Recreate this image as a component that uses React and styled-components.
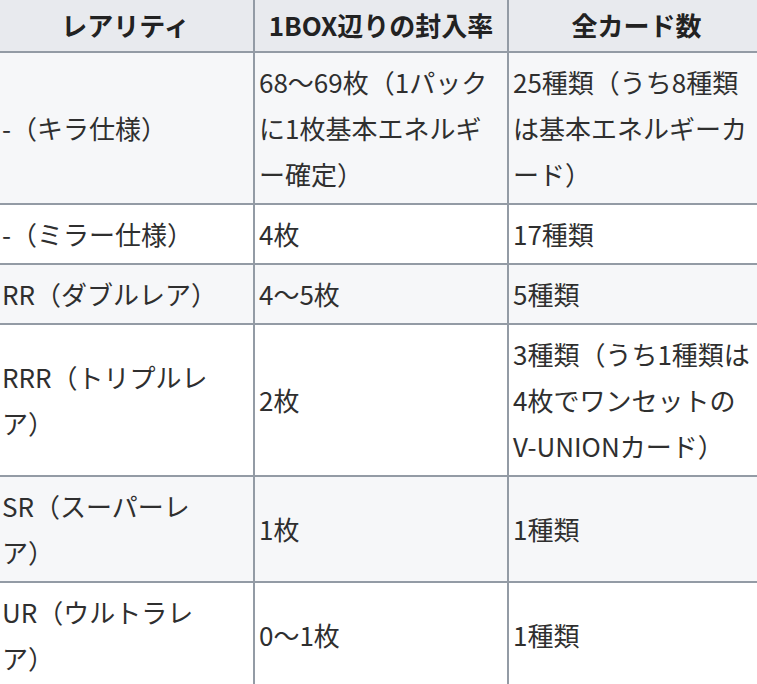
import React from 'react';
import styled, { createGlobalStyle } from 'styled-components';

const GlobalStyle = createGlobalStyle`
  html, body {
    margin: 0;
    padding: 0;
    overflow: hidden;
    background: #ffffff;
  }
`;

const Page = styled.div`
  width: 757px;
  height: 684px;
  overflow: hidden;
`;

const Table = styled.table`
  table-layout: fixed;
  width: 770px;
  margin-left: -4px;
  border-collapse: separate;
  border-spacing: 0;
  border-left: 2px solid #939ba5;
  font-family: "Noto Sans CJK JP", "Noto Sans", sans-serif;
  font-size: 26px;
  line-height: 46px;
  color: #2f2f2f;
`;

const HeadCell = styled.th`
  background: #e8eaee;
  font-weight: 700;
  text-align: center;
  padding: 2px 4px 3px;
  border-right: 2px solid #939ba5;
  border-bottom: 2px solid #939ba5;
  color: #222;
`;

const Row = styled.tr`
  background: ${props => (props.$shade ? '#f6f7f9' : '#ffffff')};
`;

const Cell = styled.td`
  padding: 6px 10px 6px 4px;
  vertical-align: middle;
  text-align: left;
  border-right: 2px solid #939ba5;
  border-bottom: 2px solid #939ba5;
  line-break: loose;
  word-break: normal;

  &:first-child {
    padding-right: 38px;
  }
`;

const NoBreak = styled.span`
  white-space: nowrap;
`;

const rows = [
  ['-（キラ仕様）', '68〜69枚（1パックに1枚基本エネルギー確定）', '25種類（うち8種類は基本エネルギーカード）'],
  ['-（ミラー仕様）', '4枚', '17種類'],
  ['RR（ダブルレア）', '4〜5枚', '5種類'],
  ['RRR（トリプルレア）', '2枚', <>3種類（うち1種類は4枚でワンセットの<NoBreak>V-UNION</NoBreak>カード）</>],
  ['SR（スーパーレア）', '1枚', '1種類'],
  ['UR（ウルトラレア）', '0〜1枚', '1種類'],
];

export default function App() {
  return (
    <Page>
      <GlobalStyle />
      <Table>
        <colgroup>
          <col style={{ width: 257 }} />
          <col style={{ width: 254 }} />
          <col style={{ width: 257 }} />
        </colgroup>
        <thead>
          <tr>
            <HeadCell>レアリティ</HeadCell>
            <HeadCell>1BOX辺りの封入率</HeadCell>
            <HeadCell>全カード数</HeadCell>
          </tr>
        </thead>
        <tbody>
          {rows.map((r, i) => (
            <Row key={i} $shade={i % 2 === 0}>
              {r.map((c, j) => (
                <Cell key={j}>{c}</Cell>
              ))}
            </Row>
          ))}
        </tbody>
      </Table>
    </Page>
  );
}
